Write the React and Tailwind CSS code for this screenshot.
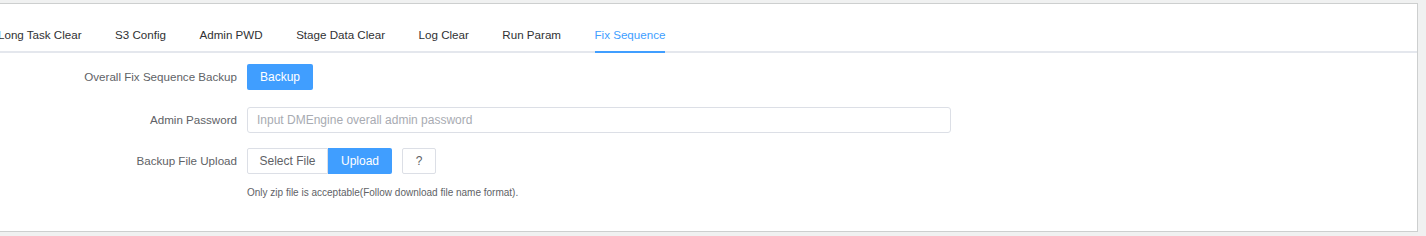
import React from "react";

const tabs = [
  "Long Task Clear",
  "S3 Config",
  "Admin PWD",
  "Stage Data Clear",
  "Log Clear",
  "Run Param",
  "Fix Sequence",
];

const App = () => {
  const active = "Fix Sequence";

  return (
    <div className="w-[1426px] h-[236px] bg-[#f0f1f1] pt-[3px] font-['Liberation_Sans',Arial,sans-serif] overflow-hidden">
      <div className="w-[1418px] h-[229px] bg-white border-t border-r border-b border-[#cdcfcf]">
        {/* tabs */}
        <div className="pt-[13px]">
          <div className="flex h-[36px] border-b-2 border-[#e4e7ed] w-[1417px]">
            <div className="flex ml-[-2px]">
              {tabs.map((t, i) => (
                <div
                  key={t}
                  className={`h-[36px] flex ${i === 0 ? "pr-[16.75px]" : "px-[16.75px]"}`}
                >
                  <span
                    className={`h-full flex items-center pt-[2px] text-[11.6px] border-b-2 ${
                      t === active
                        ? "text-[#409eff] border-[#409eff]"
                        : "text-[#303133] border-transparent"
                    }`}
                  >
                    {t}
                  </span>
                </div>
              ))}
            </div>
          </div>
        </div>

        {/* form */}
        <div className="pt-[11px] text-[11.6px]">
          <div className="flex items-center h-[26px]">
            <label className="w-[237px] text-right text-[#606266]">
              Overall Fix Sequence Backup
            </label>
            <div className="ml-[10px]">
              <button className="w-[66px] h-[26px] bg-[#409eff] text-white rounded-[2px] text-[12px]">
                Backup
              </button>
            </div>
          </div>

          <div className="flex items-center h-[26px] mt-[17px]">
            <label className="w-[237px] text-right text-[#606266]">
              Admin Password
            </label>
            <div className="ml-[10px]">
              <input
                placeholder="Input DMEngine overall admin password"
                className="w-[704px] h-[26px] border border-[#dcdfe6] rounded-[3px] px-[9px] text-[12px] text-[#606266] placeholder:text-[#a8abb2] outline-none"
              />
            </div>
          </div>

          <div className="flex items-center h-[26px] mt-[15px]">
            <label className="w-[237px] text-right text-[#606266]">
              Backup File Upload
            </label>
            <div className="ml-[10px] flex items-center">
              <button className="w-[81px] h-[26px] border border-[#dcdfe6] bg-white text-[#606266] text-[12px] rounded-l-[2px]">
                Select File
              </button>
              <button className="w-[64px] h-[26px] bg-[#409eff] text-white text-[12px] rounded-r-[2px]">
                Upload
              </button>
              <button className="ml-[10px] w-[34px] h-[26px] border border-[#dcdfe6] bg-white text-[#606266] text-[12px] rounded-[2px]">
                ?
              </button>
            </div>
          </div>

          <div className="ml-[247px] mt-[13px] text-[10px] text-[#606266] leading-[12px]">
            Only zip file is acceptable(Follow download file name format).
          </div>
        </div>
      </div>
    </div>
  );
};

export default App;
